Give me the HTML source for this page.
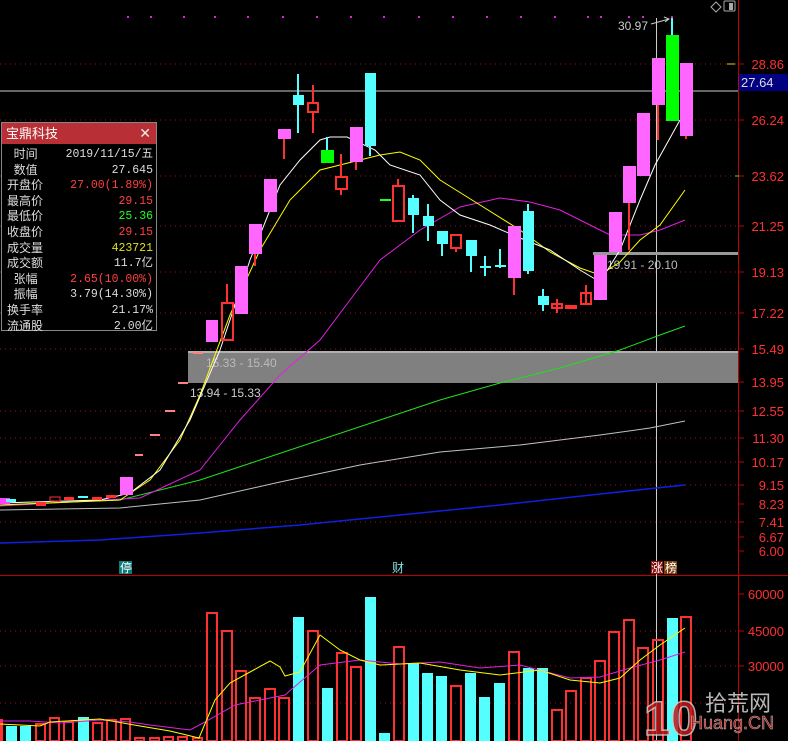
<!DOCTYPE html>
<html><head><meta charset="utf-8"><style>
body{margin:0;background:#000;width:788px;height:741px;overflow:hidden;font-family:"Liberation Sans","Noto Sans CJK SC",sans-serif}
svg{position:absolute;left:0;top:0}
#info{position:absolute;left:1px;top:122px;width:154px;height:207px;border:1px solid #888;background:#000;font-size:12px;color:#ddd}
#info .hd{background:#b83035;height:21px;line-height:21px;color:#fff;font-size:13px;padding-left:4px;position:relative}
#info .hd span{position:absolute;right:5px;top:0;font-size:14px;color:#eee}
#info .r{height:15.6px;line-height:15.6px;position:relative}
#info .r .k{position:absolute;left:5px}
#info .r .v{position:absolute;right:3px;font-family:"Liberation Mono","Noto Sans CJK SC",monospace;font-size:11.5px}
.red{color:#ff4040}.grn{color:#20ff20}.yel{color:#e0e020}
</style></head><body>
<svg width="788" height="741" viewBox="0 0 788 741" font-family="Liberation Sans, Noto Sans CJK SC, sans-serif">
<!-- grid dotted -->
<g stroke="#a01010" stroke-width="1" stroke-dasharray="1,4">
<line x1="0" y1="64" x2="738" y2="64"/><line x1="0" y1="120" x2="738" y2="120"/><line x1="0" y1="176" x2="738" y2="176"/>
<line x1="0" y1="226" x2="738" y2="226"/><line x1="0" y1="272" x2="738" y2="272"/><line x1="0" y1="313" x2="738" y2="313"/>
<line x1="0" y1="349" x2="738" y2="349"/><line x1="0" y1="411" x2="738" y2="411"/><line x1="0" y1="438" x2="738" y2="438"/>
<line x1="0" y1="462" x2="738" y2="462"/><line x1="0" y1="485" x2="738" y2="485"/><line x1="0" y1="522" x2="738" y2="522"/>
<line x1="0" y1="631" x2="738" y2="631"/><line x1="0" y1="666" x2="738" y2="666"/><line x1="0" y1="703" x2="738" y2="703"/>
</g>
<!-- axis -->
<line x1="738.5" y1="0" x2="738.5" y2="741" stroke="#c00000"/>
<line x1="0" y1="575.5" x2="788" y2="575.5" stroke="#c00000"/>
<g stroke="#c00000">
<line x1="738" y1="64" x2="744" y2="64"/><line x1="738" y1="120" x2="744" y2="120"/><line x1="738" y1="176" x2="744" y2="176"/><line x1="738" y1="226" x2="744" y2="226"/><line x1="738" y1="272" x2="744" y2="272"/><line x1="738" y1="313" x2="744" y2="313"/><line x1="738" y1="349" x2="744" y2="349"/><line x1="738" y1="382" x2="744" y2="382"/><line x1="738" y1="411" x2="744" y2="411"/><line x1="738" y1="438" x2="744" y2="438"/><line x1="738" y1="462" x2="744" y2="462"/><line x1="738" y1="485" x2="744" y2="485"/><line x1="738" y1="504" x2="744" y2="504"/><line x1="738" y1="522" x2="744" y2="522"/><line x1="738" y1="537" x2="744" y2="537"/><line x1="738" y1="551" x2="744" y2="551"/>
<line x1="738" y1="594" x2="744" y2="594"/><line x1="738" y1="631" x2="744" y2="631"/><line x1="738" y1="666" x2="744" y2="666"/><line x1="738" y1="703" x2="744" y2="703"/>
</g>
<g fill="#ff3030" font-size="13" text-anchor="end">
<text x="784" y="69">28.86</text><text x="784" y="125">26.24</text><text x="784" y="181">23.62</text><text x="784" y="231">21.25</text><text x="784" y="277">19.13</text><text x="784" y="318">17.22</text><text x="784" y="354">15.49</text><text x="784" y="387">13.95</text><text x="784" y="416">12.55</text><text x="784" y="443">11.30</text><text x="784" y="467">10.17</text><text x="784" y="490">9.15</text><text x="784" y="509">8.23</text><text x="784" y="527">7.41</text><text x="784" y="542">6.67</text><text x="784" y="556">6.00</text>
<text x="784" y="599">60000</text><text x="784" y="636">45000</text><text x="784" y="671">30000</text>
</g>
<line x1="727" y1="64" x2="735" y2="64" stroke="#dddd00"/><line x1="735" y1="176" x2="739" y2="176" stroke="#20ff20"/>
<rect x="739" y="74" width="49" height="17" fill="#000080"/>
<text x="741" y="87" font-size="13" fill="#ddd">27.64</text>
<!-- top dots -->
<g fill="#e020e0"><rect x="127" y="16" width="2" height="2"/><rect x="150" y="16" width="2" height="2"/><rect x="183" y="16" width="2" height="2"/><rect x="214" y="16" width="2" height="2"/><rect x="247" y="16" width="2" height="2"/><rect x="282" y="16" width="2" height="2"/><rect x="316" y="16" width="2" height="2"/><rect x="350" y="16" width="2" height="2"/><rect x="383" y="16" width="2" height="2"/><rect x="418" y="16" width="2" height="2"/><rect x="452" y="16" width="2" height="2"/><rect x="486" y="16" width="2" height="2"/><rect x="520" y="16" width="2" height="2"/><rect x="554" y="16" width="2" height="2"/><rect x="587" y="16" width="2" height="2"/><rect x="600" y="16" width="2" height="2"/><rect x="628" y="16" width="2" height="2"/><rect x="642" y="16" width="2" height="2"/><rect x="671" y="16" width="2" height="2"/></g>
<path d="M711 7 L716 2 L721 7 L716 12 Z" fill="none" stroke="#aaa"/>
<rect x="724" y="1" width="11" height="10" fill="none" stroke="#aaa" rx="1"/><rect x="729" y="3" width="4" height="7" fill="#aaa"/>
<text x="618" y="30" font-size="12" fill="#ccc">30.97</text>
<path d="M651 24 L669 19 M664 17 L669 19 L665 22" stroke="#ccc" fill="none"/>
<!-- crosshair -->
<line x1="0" y1="91" x2="738" y2="91" stroke="#ccc"/>
<line x1="656.5" y1="18" x2="656.5" y2="741" stroke="#ccc"/>
<!-- bands -->
<rect x="188" y="352" width="550" height="31" fill="#808080"/>
<line x1="188" y1="352" x2="738" y2="352" stroke="#b0b0b0" stroke-width="2"/>
<text x="206" y="367" font-size="12" fill="#bbb">15.33 - 15.40</text>
<text x="190" y="397" font-size="12" fill="#ccc">13.94 - 15.33</text>
<rect x="593" y="252" width="145" height="3" fill="#999"/>
<text x="607" y="269" font-size="12" fill="#bbb">19.91 - 20.10</text>
<!-- MA lines -->
<g fill="none" stroke-width="1">
<polyline stroke="#1020e0" stroke-width="1.5" points="0,543 100,540 200,533 300,525 400,515 500,505 600,494 685,485"/>
<polyline stroke="#c0c0c0" points="0,510 120,508 200,500 280,482 360,465 440,452 520,445 600,435 650,428 685,421"/>
<polyline stroke="#20e020" points="0,505 120,500 200,480 260,460 320,440 380,420 440,400 500,383 560,368 620,350 660,335 685,326"/>
<polyline stroke="#e020e0" points="0,506 140,498 200,470 240,420 280,375 320,340 350,300 380,260 420,230 460,207 500,198 530,202 560,210 590,225 610,235 640,235 660,230 685,220"/>
<polyline stroke="#ffff00" points="0,505 120,500 150,480 180,440 200,395 230,315 260,250 290,200 320,170 360,160 380,155 400,152 420,160 440,180 480,205 520,230 550,252 580,268 600,275 620,262 640,240 660,225 685,190"/>
<polyline stroke="#ffffff" points="0,503 100,500 130,493 160,470 190,420 220,350 250,260 280,185 300,160 320,140 330,137 347,137 375,150 390,165 420,175 440,200 460,215 490,225 520,238 550,250 580,270 600,282 620,250 640,200 655,165 680,120"/>
</g>
<!-- small left candles -->
<g>
<rect x="0" y="498" width="10" height="6" fill="#ff40ff"/><rect x="6" y="499" width="10" height="3" fill="#55ffff"/>
<rect x="36" y="502" width="10" height="4" fill="#ff3030"/><rect x="50" y="497" width="10" height="4" fill="none" stroke="#ff3030"/>
<rect x="64" y="497" width="10" height="3" fill="#ff3030"/><rect x="78" y="496" width="10" height="2" fill="#55ffff"/>
<rect x="92" y="497" width="10" height="3" fill="#ff3030"/><rect x="106" y="495" width="10" height="3" fill="#ff3030"/>
<rect x="120" y="477" width="13" height="18" fill="#ff66ff"/>
<g fill="#ff8080"><rect x="135" y="454" width="8" height="2"/><rect x="150" y="434" width="10" height="2"/><rect x="165" y="410" width="10" height="2"/><rect x="178" y="382" width="10" height="2"/><rect x="193" y="352" width="10" height="2"/></g>
</g>
<!-- candles -->
<g stroke-width="2">
<line x1="227" y1="284" x2="227" y2="303" stroke="#ff3030"/><rect x="222" y="303" width="11" height="37" fill="none" stroke="#ff3030"/>
<rect x="206" y="320" width="12" height="22" fill="#ff66ff"/>
<rect x="235" y="266" width="13" height="48" fill="#ff66ff"/>
<line x1="255" y1="254" x2="255" y2="266" stroke="#ff3030"/><rect x="249" y="224" width="13" height="30" fill="#ff66ff"/>
<rect x="264" y="179" width="13" height="33" fill="#ff66ff"/>
<line x1="284" y1="139" x2="284" y2="159" stroke="#ff3030"/><rect x="278" y="129" width="13" height="10" fill="#ff66ff"/>
<line x1="298" y1="74" x2="298" y2="133" stroke="#55ffff"/><rect x="293" y="95" width="11" height="10" fill="#55ffff"/>
<line x1="313" y1="85" x2="313" y2="133" stroke="#ff3030"/><rect x="308" y="103" width="10" height="9" fill="#000" stroke="#ff3030"/>
<line x1="327" y1="137" x2="327" y2="150" stroke="#55ffff"/><rect x="321" y="150" width="13" height="13" fill="#00ff00" stroke="none"/>
<line x1="341" y1="154" x2="341" y2="195" stroke="#ff3030"/><rect x="336" y="177" width="11" height="12" fill="#000" stroke="#ff3030"/>
<line x1="356" y1="162" x2="356" y2="170" stroke="#ff3030"/><rect x="350" y="127" width="13" height="35" fill="#ff66ff" stroke="none"/>
<line x1="370" y1="146" x2="370" y2="156" stroke="#55ffff"/><rect x="365" y="73" width="11" height="73" fill="#55ffff" stroke="none"/>
<line x1="380" y1="200" x2="391" y2="200" stroke="#20ff20"/>
<line x1="398" y1="179" x2="398" y2="186" stroke="#ff3030"/><rect x="393" y="186" width="11" height="35" fill="none" stroke="#ff3030"/>
<line x1="413" y1="195" x2="413" y2="233" stroke="#55ffff"/><rect x="408" y="198" width="11" height="17" fill="#55ffff" stroke="none"/>
<line x1="428" y1="204" x2="428" y2="241" stroke="#55ffff"/><rect x="423" y="216" width="11" height="10" fill="#55ffff" stroke="none"/>
<line x1="442" y1="231" x2="442" y2="256" stroke="#55ffff"/><rect x="437" y="231" width="11" height="13" fill="#55ffff" stroke="none"/>
<line x1="456" y1="248" x2="456" y2="252" stroke="#ff3030"/><rect x="451" y="235" width="10" height="13" fill="none" stroke="#ff3030"/>
<line x1="471" y1="256" x2="471" y2="272" stroke="#55ffff"/><rect x="466" y="240" width="11" height="16" fill="#55ffff" stroke="none"/>
<line x1="485" y1="256" x2="485" y2="276" stroke="#55ffff"/><line x1="480" y1="267" x2="491" y2="267" stroke="#55ffff"/>
<line x1="500" y1="249" x2="500" y2="268" stroke="#55ffff"/><line x1="495" y1="266" x2="506" y2="266" stroke="#55ffff"/>
<line x1="514" y1="278" x2="514" y2="295" stroke="#ff3030"/><rect x="508" y="226" width="13" height="52" fill="#ff66ff" stroke="none"/>
<line x1="528" y1="204" x2="528" y2="274" stroke="#55ffff"/><rect x="523" y="211" width="11" height="60" fill="#55ffff" stroke="none"/>
<line x1="543" y1="289" x2="543" y2="311" stroke="#55ffff"/><rect x="538" y="296" width="11" height="9" fill="#55ffff" stroke="none"/>
<line x1="557" y1="299" x2="557" y2="313" stroke="#ff3030"/><rect x="552" y="304" width="10" height="4" fill="none" stroke="#ff3030"/>
<rect x="565" y="305" width="12" height="4" fill="#ff3030" stroke="none"/>
<line x1="586" y1="285" x2="586" y2="305" stroke="#ff3030"/><rect x="581" y="293" width="10" height="11" fill="none" stroke="#ff3030"/>
<rect x="594" y="255" width="13" height="45" fill="#ff66ff" stroke="none"/>
<rect x="609" y="212" width="13" height="40" fill="#ff66ff" stroke="none"/>
<line x1="629" y1="203" x2="629" y2="250" stroke="#ff3030"/><rect x="623" y="166" width="13" height="37" fill="#ff66ff" stroke="none"/>
<rect x="637" y="113" width="13" height="63" fill="#ff66ff" stroke="none"/>
<line x1="658" y1="105" x2="658" y2="140" stroke="#ff3030"/><rect x="652" y="58" width="13" height="47" fill="#ff66ff" stroke="none"/>
<line x1="672" y1="18" x2="672" y2="35" stroke="#55ffff"/><rect x="666" y="35" width="13" height="86" fill="#00ff00" stroke="none"/>
<line x1="686" y1="136" x2="686" y2="139" stroke="#ff3030"/><rect x="680" y="63" width="13" height="73" fill="#ff66ff" stroke="none"/>
</g>
<!-- markers -->
<rect x="119" y="561" width="13" height="13" fill="#107a7a"/><text x="120" y="572" font-size="12" fill="#fff">停</text>
<text x="392" y="572" font-size="12" fill="#7fe0e0">财</text>
<rect x="651" y="561" width="12" height="13" fill="#8a0c0c"/><text x="651" y="572" font-size="12" fill="#fff">涨</text>
<rect x="664" y="561" width="13" height="13" fill="#7a4010"/><text x="665" y="572" font-size="12" fill="#fff">榜</text>
<!-- volume bars -->
<g fill="none" stroke="#ff3030" stroke-width="2">
<rect x="0" y="720" width="2" height="21"/><rect x="36" y="724" width="9" height="17"/><rect x="50" y="718" width="9" height="23"/><rect x="64" y="722" width="9" height="19"/>
<rect x="93" y="723" width="9" height="18"/><rect x="107" y="720" width="9" height="21"/><rect x="121" y="719" width="9" height="22"/>
<rect x="135" y="738" width="9" height="3"/><rect x="150" y="738" width="9" height="3"/><rect x="164" y="737" width="9" height="4"/><rect x="178" y="737" width="9" height="4"/><rect x="193" y="738" width="9" height="3"/>
<rect x="207" y="613" width="10" height="128"/><rect x="222" y="631" width="10" height="110"/><rect x="236" y="671" width="10" height="70"/><rect x="250" y="698" width="10" height="43"/><rect x="265" y="689" width="10" height="52"/><rect x="279" y="698" width="10" height="43"/>
<rect x="308" y="631" width="10" height="110"/><rect x="337" y="653" width="10" height="88"/><rect x="351" y="667" width="10" height="74"/><rect x="394" y="647" width="10" height="94"/><rect x="451" y="686" width="10" height="55"/><rect x="509" y="652" width="10" height="89"/>
<rect x="552" y="710" width="10" height="31"/><rect x="566" y="691" width="10" height="50"/><rect x="581" y="678" width="10" height="63"/><rect x="595" y="661" width="10" height="80"/><rect x="609" y="632" width="10" height="109"/><rect x="624" y="620" width="10" height="121"/><rect x="638" y="648" width="10" height="93"/><rect x="653" y="640" width="10" height="101"/><rect x="681" y="617" width="10" height="124"/>
</g>
<g fill="#55ffff">
<rect x="6" y="726" width="11" height="15"/><rect x="20" y="726" width="11" height="15"/><rect x="78" y="717" width="11" height="24"/>
<rect x="293" y="617" width="11" height="124"/><rect x="322" y="688" width="11" height="53"/><rect x="365" y="597" width="11" height="144"/><rect x="379" y="733" width="11" height="8"/>
<rect x="408" y="663" width="11" height="78"/><rect x="422" y="673" width="11" height="68"/><rect x="436" y="676" width="11" height="65"/><rect x="465" y="673" width="11" height="68"/><rect x="479" y="697" width="11" height="44"/><rect x="494" y="683" width="11" height="58"/><rect x="523" y="668" width="11" height="73"/><rect x="537" y="668" width="11" height="73"/><rect x="667" y="618" width="11" height="123"/>
</g>
<polyline fill="none" stroke="#e020e0" points="0,721 30,721 60,723 100,720 130,722 150,725 190,730 205,722 235,705 260,700 285,695 300,682 320,665 360,660 400,664 440,662 480,668 520,665 570,678 600,677 630,668 660,660 685,652"/>
<polyline fill="none" stroke="#ffff00" points="0,724 40,726 50,722 100,719 140,726 170,731 199,738 215,700 230,683 250,672 270,661 280,667 285,676 300,672 320,635 340,650 360,660 380,665 420,663 460,670 500,675 540,670 570,680 600,683 620,678 640,660 660,645 685,628"/>
<!-- watermark -->
<g opacity="0.85">
<text x="644" y="735" font-size="48" font-weight="bold" fill="#c01818" stroke="#ccc" stroke-width="1.5" font-family="Liberation Sans, sans-serif">10</text>
<text x="705" y="711" font-size="22" fill="#d8d8d8" font-family="Noto Sans CJK SC, sans-serif">拾荒网</text>
<text x="690" y="729" font-size="18" fill="#d01010" stroke="#ddd" stroke-width="0.5">Huang.CN</text>
</g>
</svg>
<div id="info">
<div class="hd">宝鼎科技<span>✕</span></div>
<div style="height:3px"></div>
<div class="r"><span class="k">&nbsp;&nbsp;时间</span><span class="v">2019/11/15/五</span></div>
<div class="r"><span class="k">&nbsp;&nbsp;数值</span><span class="v">27.645</span></div>
<div class="r"><span class="k">开盘价</span><span class="v red">27.00(1.89%)</span></div>
<div class="r"><span class="k">最高价</span><span class="v red">29.15</span></div>
<div class="r"><span class="k">最低价</span><span class="v grn">25.36</span></div>
<div class="r"><span class="k">收盘价</span><span class="v red">29.15</span></div>
<div class="r"><span class="k">成交量</span><span class="v yel">423721</span></div>
<div class="r"><span class="k">成交额</span><span class="v">11.7亿</span></div>
<div class="r"><span class="k">&nbsp;&nbsp;张幅</span><span class="v red">2.65(10.00%)</span></div>
<div class="r"><span class="k">&nbsp;&nbsp;振幅</span><span class="v">3.79(14.30%)</span></div>
<div class="r"><span class="k">换手率</span><span class="v">21.17%</span></div>
<div class="r"><span class="k">流通股</span><span class="v">2.00亿</span></div>
</div>
</body></html>
